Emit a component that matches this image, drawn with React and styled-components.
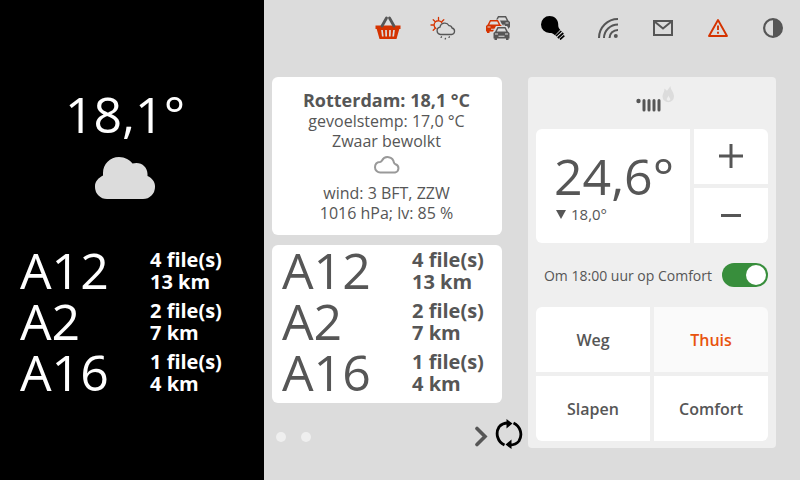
import React, { useState } from "react";
import styled, { createGlobalStyle } from "styled-components";

const GlobalStyle = createGlobalStyle`
  *, *::before, *::after { box-sizing: border-box; }
  body {
    margin: 0;
    background: #dcdcdc;
    color: #565656;
    font-family: "Open Sans", "Noto Sans", sans-serif;
    font-size: 16px;
  }
  button { font: inherit; color: inherit; border: 0; padding: 0; cursor: pointer; }
  svg { display: block; flex: none; }
`;

const Screen = styled.div`
  display: grid;
  grid-template-columns: 33% 1fr;
  min-height: 100vh;
`;

const DimPanel = styled.aside`
  background: #000;
  color: #fff;
  padding: 80px 14px 0;
`;

const Outside = styled.div`
  display: flex;
  flex-direction: column;
  align-items: center;
  gap: 9px;
  height: 165px;
  padding-right: 14px;
`;

const BigTemp = styled.div`
  font-size: 50px;
  line-height: 68px;
`;

const Main = styled.main`
  min-width: 0;
`;

const Toolbar = styled.nav`
  display: flex;
  justify-content: flex-end;
  height: 56px;
`;

const ToolButton = styled.button`
  display: flex;
  align-items: center;
  justify-content: center;
  width: 55px;
  background: none;
`;

const Content = styled.div`
  display: grid;
  grid-template-columns: 1fr 248px;
  align-items: start;
  padding: 21px 24px 0 8px;
`;

const Cards = styled.div`
  display: flex;
  flex-direction: column;
  gap: 10px;
`;

const Card = styled.section`
  height: 158px;
  margin-right: 26px;
  border-radius: 6px;
  background: #fff;
`;

const WeatherCard = styled(Card)`
  display: flex;
  flex-direction: column;
  align-items: center;
  padding: 13px 1px 0 0;
  line-height: 20px;
`;

const WeatherTitle = styled.h2`
  margin: 0;
  font-size: 18px;
  line-height: 21px;
`;

const WeatherIcon = styled.div`
  height: 32px;
  padding-top: 4px;
`;

const RoadList = styled.ul`
  margin: 0;
  padding: 0 0 0 ${(p) => (p.$inCard ? 10 : 6)}px;
  list-style: none;
`;

const RoadRow = styled.li`
  display: grid;
  grid-template-columns: 130px 1fr;
  align-items: center;
  height: 51px;
`;

const RoadName = styled.span`
  font-size: 50px;
  line-height: 51px;
`;

const RoadInfo = styled.span`
  font-size: 20px;
  font-weight: 700;
  line-height: 22px;
`;

const Line = styled.span`
  display: block;
`;

const Pager = styled.div`
  display: flex;
  align-items: center;
  justify-content: space-between;
  height: 48px;
  padding: 0 5px 0 4px;
`;

const PagerGroup = styled.div`
  display: flex;
  align-items: center;
  gap: ${(p) => p.$gap}px;
`;

const Dot = styled.button`
  width: 10px;
  height: 10px;
  border-radius: 50%;
  background: #efefef;
`;

const PlainButton = styled.button`
  background: none;
`;

const RefreshButton = styled(PlainButton)`
  padding-bottom: 6px;
`;

const Thermostat = styled.section`
  padding: 0 8px 7px;
  border-radius: 4px;
  background: #efefef;
`;

const ThermoHeader = styled.div`
  display: flex;
  justify-content: center;
  height: 52px;
  padding: 9px 0 0 7px;
`;

const TempGrid = styled.div`
  display: grid;
  grid-template-columns: 1fr 74px;
  grid-template-rows: 55px 55px;
  gap: 4px;
  overflow: hidden;
  border-radius: 6px;
`;

const Display = styled.div`
  grid-row: span 2;
  display: flex;
  flex-direction: column;
  padding: 17px 0 0 18px;
  background: #fff;
`;

const RoomTemp = styled.div`
  font-size: 50px;
  line-height: 60px;
`;

const Setpoint = styled.div`
  display: flex;
  align-items: center;
  gap: 5px;
  padding-left: 2px;
  font-size: 15px;
  line-height: 16px;
`;

const StepButton = styled.button`
  display: flex;
  align-items: center;
  justify-content: center;
  background: #fff;
`;

const Program = styled.label`
  display: flex;
  align-items: center;
  justify-content: flex-end;
  gap: 10px;
  height: 64px;
  font-size: 14px;
`;

const Switch = styled.input`
  appearance: none;
  display: flex;
  align-items: center;
  justify-content: ${(p) => (p.checked ? "flex-end" : "flex-start")};
  width: 46px;
  height: 24px;
  margin: 0;
  padding: 2px;
  border-radius: 12px;
  background: ${(p) => (p.checked ? "#388e3c" : "#aaa")};
  cursor: pointer;

  &::before {
    content: "";
    width: 20px;
    height: 20px;
    border-radius: 50%;
    background: #fff;
  }
`;

const Modes = styled.div`
  display: grid;
  grid-template-columns: 1fr 1fr;
  grid-auto-rows: 65px;
  gap: 4px;
  overflow: hidden;
  border-radius: 6px;
`;

const ModeButton = styled.button`
  background: ${(p) => (p.$active ? "#fafafa" : "#fff")};
  && { color: ${(p) => (p.$active ? "#e8530e" : "#565656")}; }
  font-weight: 600;
`;

const GREY = "#565656";
const RED = "#d53300";

const BasketIcon = () => (
  <svg width="26" height="24" viewBox="0 0 26 24">
    <path d="M.5 9.500h25v3.500h-1.200L21.500 23h-17L1.700 13H.5z" fill={RED} />
    <path d="M7 14l.8 6.500M11 14l.2 6.500M15 14l-.2 6.500M19 14l-.8 6.500" stroke="#dcdcdc" strokeWidth="1.700" />
    <path d="M7 10l4.500-8M19 10l-4.500-8" stroke={GREY} strokeWidth="2.800" strokeLinecap="round" />
  </svg>
);

const SunCloudIcon = () => (
  <svg width="26" height="24" viewBox="0 0 26 24" fill="none" strokeLinecap="round">
    <path
      d="M6 12.500A4.200 4.200 0 1 1 12 7M8.500 1.500v2.300M3.200 3.700l1.600 1.600M1 9h2.300M3.200 14.300l1.300-1.300M13.800 3.700l-1.600 1.600"
      stroke={RED}
      strokeWidth="1.300"
    />
    <path
      d="M10.500 18.500a3.700 3.700 0 0 1-.5-7.300 4.800 4.800 0 0 1 9-1.500 3 3 0 0 1 3 2.300 3.300 3.300 0 0 1-.5 6.500z"
      stroke={GREY}
      strokeWidth="1.300"
    />
    <path d="M11.500 20.800l-.4.600M15.500 22.300l-.3.700M19.400 20.800l-.4.600" stroke={GREY} strokeWidth="1.300" />
  </svg>
);

const Car = ({ x, y, color }) => (
  <g transform={`translate(${x} ${y})`}>
    <path d="M4 0h8l2.300 4.500L16 6v5.500h-1V13h-2.500v-1.500h-9V13H1v-1.500H0V6l1.700-1.500z" fill={color} />
    <path d="M4.800 1.500h6.400l1.500 3H3.300z" fill="#dcdcdc" />
    <path d="M1.500 7h3M11.500 7h3M5 9.200h6" stroke="#dcdcdc" strokeWidth="1.100" />
  </g>
);

const TrafficIcon = () => (
  <svg width="24" height="24" viewBox="0 0 24 24">
    <Car x="8" y="0" color={GREY} />
    <path d="M2.500 3.500h11l4 8-3 5H0V8z" fill="#dcdcdc" />
    <Car x="0" y="4" color={RED} />
    <path d="M10 10h11l3 5v9H6.800v-8z" fill="#dcdcdc" />
    <Car x="7.500" y="11" color={GREY} />
  </svg>
);

const BulbIcon = () => (
  <svg width="26" height="24" viewBox="0 0 26 24">
    <path d="M9.500 0C14.500 0 18 3.500 18.200 8c0 3 .3 4 2 5.800l-5.200 5.400C13.200 17.500 12 17 9.500 17a8.500 8.500 0 0 1 0-17z" fill="#000" />
    <path d="M16 20l5.300-5M17.800 22l5.500-5M20 23.500l4.300-3.800" stroke="#000" strokeWidth="1.700" />
  </svg>
);

const SignalIcon = () => (
  <svg width="20" height="20" viewBox="0 0 20 20" fill="none" stroke={GREY} strokeWidth="2">
    <path d="M1 20A19 19 0 0 1 20 1M6 20A14 13.500 0 0 1 20 6.500M11.500 20A8.500 8 0 0 1 20 12" />
    <circle cx="17.800" cy="18" r="2" fill={GREY} stroke="none" />
  </svg>
);

const MailIcon = () => (
  <svg width="20" height="16" viewBox="0 0 20 16" fill="none" stroke={GREY} strokeWidth="2">
    <path d="M1 1h18v14H1zM1.500 1.500L10 8.500l8.500-7" />
  </svg>
);

const WarningIcon = () => (
  <svg width="22" height="20" viewBox="0 0 22 20" fill="none" stroke={RED} strokeWidth="1.900" strokeLinejoin="round">
    <path d="M11 2l9 16H2z" />
    <path d="M11 7.500v4.500M11 13.800v2" />
  </svg>
);

const ContrastIcon = () => (
  <svg width="20" height="20" viewBox="0 0 20 20">
    <circle cx="10" cy="10" r="8.900" fill="none" stroke={GREY} strokeWidth="2.200" />
    <path d="M10 1a9 9 0 0 1 0 18z" fill={GREY} />
  </svg>
);

const SolidCloud = () => (
  <svg width="60" height="42" viewBox="0 0 60 42" fill="#dcdcdc">
    <path d="M12 42A12 12 0 0 1 0 30v-1c0-4 3-8 8-10.500V16C8 7 15 0 24 0c6 0 11 3 13.500 6.500 8-2.500 15 3 15 10.500v2c4.500 2 7.500 6 7.500 10v1a12 12 0 0 1-12 12z" />
  </svg>
);

const OutlineCloud = () => (
  <svg width="28" height="20" viewBox="0 0 28 20" fill="none" stroke="#999" strokeWidth="2">
    <path d="M7.500 17.500a5.300 5.300 0 0 1-5.500-5.300C2 9.300 4 7.200 7 7c1-.2 1.500-.5 2-1.500 3-5.500 11-4 12 2.300.3 1 .8 1.200 1.500 1.400a4.300 4.300 0 0 1-.5 8.300z" />
  </svg>
);

const RadiatorIcon = () => (
  <svg width="40" height="28" viewBox="0 0 40 28">
    <circle cx="2.500" cy="15" r="2.200" fill={GREY} />
    <path d="M8 14.500v9.500M13 14.500v9.500M18 14.500v9.500M23 14.500v9.500" stroke={GREY} strokeWidth="3" strokeLinecap="round" />
    <path
      fillRule="evenodd"
      d="M28.500 2.500l2.500 2.200L34.500 0c0 4 3.500 6 3.500 10.500a5.700 5.700 0 0 1-11.500 0c0-3 2-4.500 2-8zM32.500 9.500c-.5 2-1.800 2.500-1.800 4a1.900 1.900 0 0 0 3.600 0c0-1.500-1.300-2-1.800-4z"
      fill="#dcdcdc"
    />
  </svg>
);

const ChevronIcon = () => (
  <svg width="14" height="22" viewBox="0 0 14 22" fill="none" stroke={GREY} strokeWidth="3.600" strokeLinecap="round">
    <path d="M3 2.500l8 8-8 8" />
  </svg>
);

const RefreshIcon = () => (
  <svg width="28" height="30" viewBox="0 0 28 30">
    <g fill="none" stroke="#000" strokeWidth="2.800">
      <path d="M9.500 26A12.600 12.600 0 0 1 4 8C6.500 4.800 9.500 3.800 14 4" />
      <path d="M18.500 4A12.600 12.600 0 0 1 24 22c-2.500 3.200-5.500 4.200-10 4" />
    </g>
    <path d="M11.500 0l6 4.500-6 5zM16.500 20.500v9.500l-6-4.500z" />
  </svg>
);

const PlusIcon = () => (
  <svg width="24" height="25" viewBox="0 0 24 25" stroke={GREY} strokeWidth="3">
    <path d="M12 0v24M0 12h24" />
  </svg>
);

const MinusIcon = () => (
  <svg width="24" height="25" viewBox="0 0 24 25" stroke={GREY} strokeWidth="3">
    <path d="M2 12.500h20" />
  </svg>
);

const DownIcon = () => (
  <svg width="10" height="9" viewBox="0 0 10 9" fill={GREY}>
    <path d="M0 0h10L5 9z" />
  </svg>
);

const tools = [
  ["Boodschappen", BasketIcon],
  ["Weer", SunCloudIcon],
  ["Verkeer", TrafficIcon],
  ["Lampen", BulbIcon],
  ["Verbinding", SignalIcon],
  ["Berichten", MailIcon],
  ["Waarschuwing", WarningIcon],
  ["Dimmen", ContrastIcon],
];

const roads = [
  { name: "A12", jams: 4, km: 13 },
  { name: "A2", jams: 2, km: 7 },
  { name: "A16", jams: 1, km: 4 },
];

const Roads = ({ inCard }) => (
  <RoadList $inCard={inCard}>
    {roads.map((r) => (
      <RoadRow key={r.name}>
        <RoadName>{r.name}</RoadName>
        <RoadInfo>
          <Line>{r.jams} file(s)</Line>
          <Line>{r.km} km</Line>
        </RoadInfo>
      </RoadRow>
    ))}
  </RoadList>
);

export default function App() {
  const [mode, setMode] = useState("Thuis");
  const [program, setProgram] = useState(true);

  return (
    <Screen>
      <GlobalStyle />
      <DimPanel>
        <Outside>
          <BigTemp>18,1°</BigTemp>
          <SolidCloud />
        </Outside>
        <Roads />
      </DimPanel>
      <Main>
        <Toolbar>
          {tools.map(([label, Icon]) => (
            <ToolButton key={label} aria-label={label}>
              <Icon />
            </ToolButton>
          ))}
        </Toolbar>
        <Content>
          <Cards>
            <WeatherCard>
              <WeatherTitle>Rotterdam: 18,1 °C</WeatherTitle>
              <Line>gevoelstemp: 17,0 °C</Line>
              <Line>Zwaar bewolkt</Line>
              <WeatherIcon>
                <OutlineCloud />
              </WeatherIcon>
              <Line>wind: 3 BFT, ZZW</Line>
              <Line>1016 hPa; lv: 85 %</Line>
            </WeatherCard>
            <Card>
              <Roads inCard />
            </Card>
            <Pager>
              <PagerGroup $gap={15}>
                <Dot aria-label="Pagina 1" />
                <Dot aria-label="Pagina 2" />
              </PagerGroup>
              <PagerGroup $gap={7}>
                <PlainButton aria-label="Volgende">
                  <ChevronIcon />
                </PlainButton>
                <RefreshButton aria-label="Vernieuwen">
                  <RefreshIcon />
                </RefreshButton>
              </PagerGroup>
            </Pager>
          </Cards>
          <Thermostat>
            <ThermoHeader>
              <RadiatorIcon />
            </ThermoHeader>
            <TempGrid>
              <Display>
                <RoomTemp>24,6°</RoomTemp>
                <Setpoint>
                  <DownIcon />
                  18,0°
                </Setpoint>
              </Display>
              <StepButton aria-label="Warmer">
                <PlusIcon />
              </StepButton>
              <StepButton aria-label="Kouder">
                <MinusIcon />
              </StepButton>
            </TempGrid>
            <Program>
              Om 18:00 uur op Comfort
              <Switch
                type="checkbox"
                role="switch"
                checked={program}
                onChange={(e) => setProgram(e.target.checked)}
              />
            </Program>
            <Modes>
              {["Weg", "Thuis", "Slapen", "Comfort"].map((m) => (
                <ModeButton key={m} $active={m === mode} aria-pressed={m === mode} onClick={() => setMode(m)}>
                  {m}
                </ModeButton>
              ))}
            </Modes>
          </Thermostat>
        </Content>
      </Main>
    </Screen>
  );
}
